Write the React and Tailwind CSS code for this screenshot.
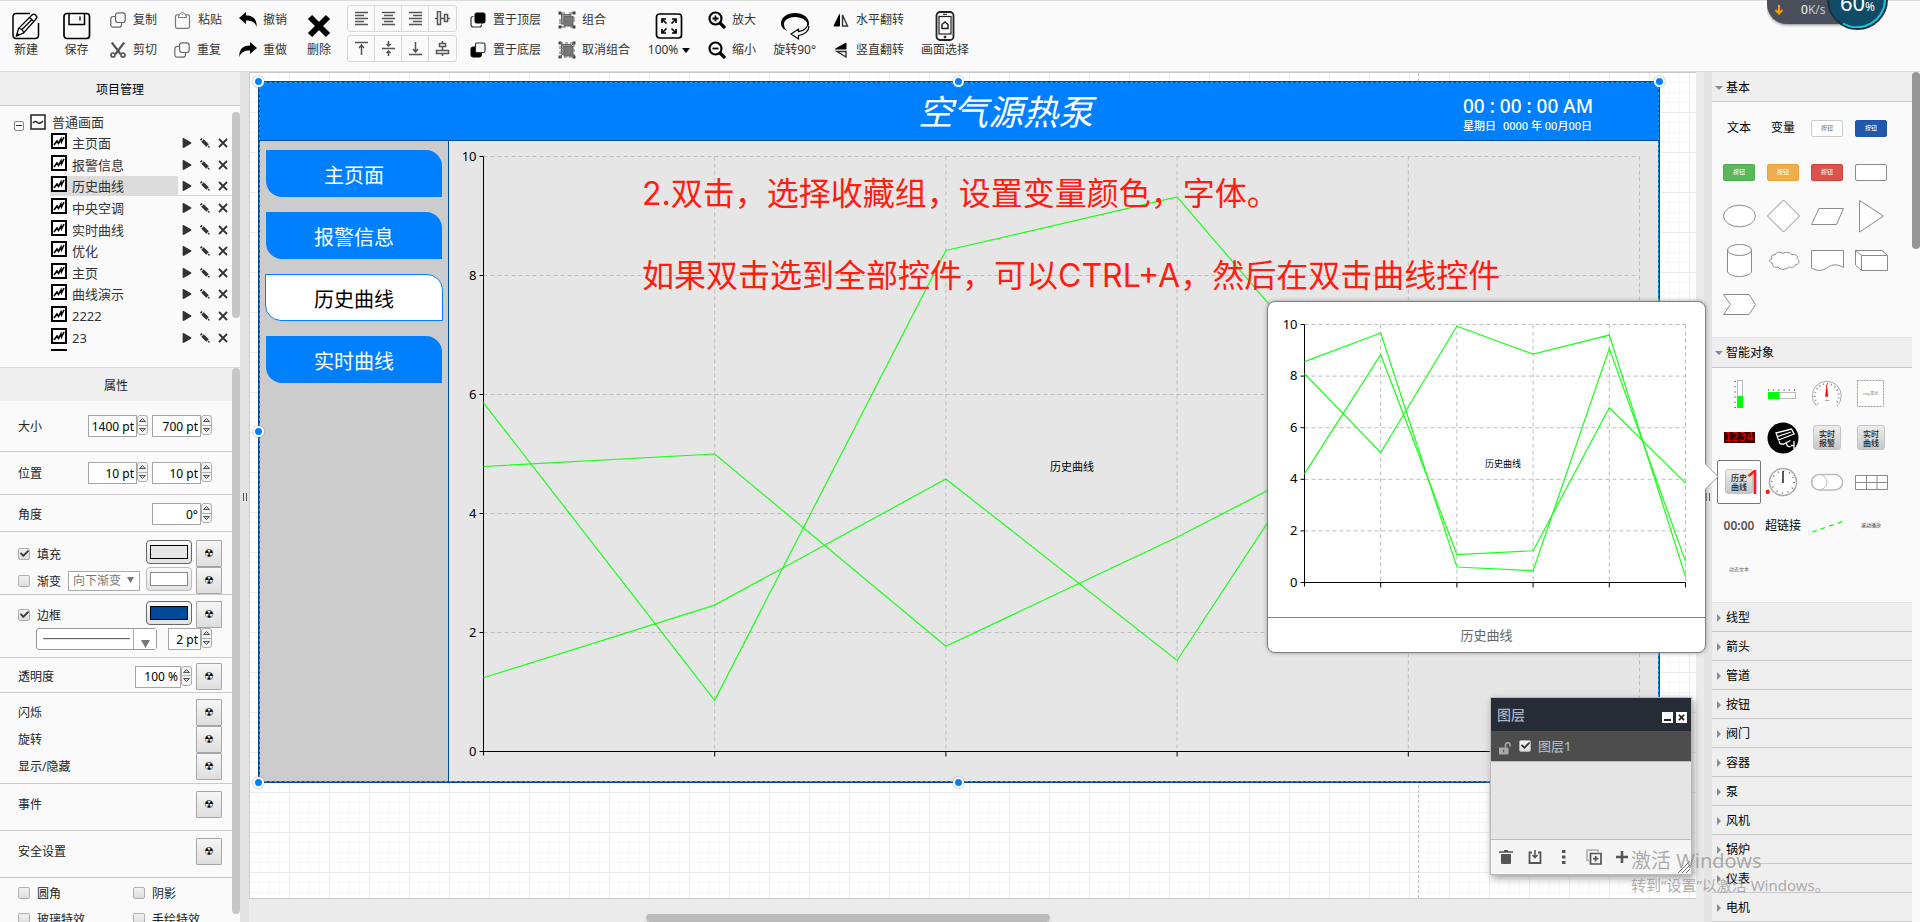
import React, { useState } from 'react';
import { FaCheck, FaPlay, FaTimes, FaTrash } from 'react-icons/fa';

const PAGES = ['主页面', '报警信息', '历史曲线', '中央空调', '实时曲线', '优化', '主页', '曲线演示', '2222', '23'];
const NAV_ITEMS = ['主页面', '报警信息', '历史曲线', '实时曲线'];
const CATEGORIES = ['线型', '箭头', '管道', '按钮', '阀门', '容器', '泵', '风机', '锅炉', '仪表', '电机'];

/* ---------- icons ---------- */

const Icon = ({ size = 16, box = 16, children, className = '' }) => (
  <svg
    width={size}
    height={size}
    viewBox={`0 0 ${box} ${box}`}
    fill="none"
    stroke="currentColor"
    className={`shrink-0 ${className}`}
    aria-hidden="true"
  >
    {children}
  </svg>
);

const NewIcon = () => (
  <Icon size={28} box={28} className="text-black">
    <path d="M18 1.500H4A3 3 0 0 0 1 4.500v19a3 3 0 0 0 3 3h19.500a3 3 0 0 0 3-3V11" strokeWidth="1.500" />
    <path d="M4.500 24l2-7.500L20 3c1.200-1.200 2.800-.8 3.800.2 1.200 1.200 1.400 2.600.2 3.800L11.500 21z" strokeWidth="1.300" />
    <path d="M6.500 16.500c2.500 0 5 2 5 4.500M17.500 5.500l4.500 4M9.500 18l10-10" strokeWidth="1.200" />
    <path d="M4.500 24l.8-3 2 2z" fill="currentColor" />
  </Icon>
);

const SaveIcon = () => (
  <Icon size={28} box={28} className="text-black">
    <rect x="1" y="1.500" width="25.500" height="25" rx="3" strokeWidth="1.700" />
    <path d="M6 2v10.500h15.500V2" strokeWidth="1.500" />
    <path d="M17 4.500v4" strokeWidth="1.300" />
  </Icon>
);

const CopyIcon = () => (
  <Icon className="text-[#666]">
    <rect x="5.500" y=".8" width="9.700" height="9.700" rx="2.500" strokeWidth="1.200" />
    <path d="M5.500 4.500H3A2.300 2.300 0 0 0 .8 6.800v6A2.300 2.300 0 0 0 3 15.200h6.200a2.300 2.300 0 0 0 2.300-2.300v-2.400" strokeWidth="1.200" />
  </Icon>
);

const CutIcon = () => (
  <Icon className="text-[#555]">
    <path d="M1.800.5L10.500 12M14.200.5L5.500 12" strokeWidth="2.200" />
    <circle cx="3" cy="13" r="2" strokeWidth="1.700" />
    <circle cx="13" cy="13" r="2" strokeWidth="1.700" />
  </Icon>
);

const PasteIcon = () => (
  <Icon size={17} box={17} className="text-[#777]">
    <rect x="1.500" y="2.800" width="14" height="13.500" rx="1.500" strokeWidth="1.200" />
    <path d="M4.500 5.500c0-3 2-2.500 2.500-4.500.8-.8 2.200-.8 3 0 .5 2 2.500 1.500 2.500 4.500z" fill="#fafafa" />
    <path d="M8.500 2v.8" />
  </Icon>
);

const UndoIcon = ({ redo }) => (
  <Icon size={18} box={18} className={redo ? 'text-black -scale-x-100' : 'text-black'}>
    <path d="M0 7L7 1v3.500c7 0 11 3.500 10.700 11.500C16 11 12.500 9.500 7 9.500V13z" fill="currentColor" stroke="none" />
  </Icon>
);

const ToFrontIcon = () => (
  <Icon className="text-[#333]">
    <rect x="5" y="1" width="10" height="10" rx="1.500" fill="#000" stroke="#000" />
    <path d="M3.500 4.500H3A2 2 0 0 0 1 6.500v6.300A2.200 2.200 0 0 0 3.200 15h6.300a2 2 0 0 0 2-2v-.5" strokeWidth="1.200" />
  </Icon>
);

const ToBackIcon = () => (
  <Icon className="text-[#333]">
    <rect x="1" y="5" width="10.500" height="10" rx="2" fill="#000" stroke="#000" />
    <rect x="5.500" y="1" width="9.500" height="9.500" rx="1.500" fill="#fafafa" strokeWidth="1.200" />
  </Icon>
);

const GroupIcon = ({ broken }) => (
  <Icon size={18} box={18} className="text-[#666]">
    <rect x="3.500" y="3.500" width="9.500" height="9.500" fill="#999" />
    <rect x="6" y="5.500" width="9" height="9.500" fill="#777" />
    <path d="M2 2h14v14H2z" strokeWidth="1" strokeDasharray={broken ? '3 2' : '5 4'} />
    {[[2, 2], [16, 2], [2, 16], [16, 16]].map(([x, y]) => (
      <rect key={`${x}-${y}`} x={x - 1} y={y - 1} width="2" height="2" fill="#444" stroke="#444" />
    ))}
    {broken && <path d="M2 2l4 4M16 2l-4 4M2 16l4-4M16 16l-4-4" />}
  </Icon>
);

const FitIcon = () => (
  <Icon size={28} box={28} className="text-black">
    <rect x="1.500" y="2" width="25" height="24" rx="3" strokeWidth="1.700" />
    <path d="M7 11V7h4M17 7h4v4M21 17v4h-4M11 21H7v-4M7.500 7.500l4 4M20.500 7.500l-4 4M20.500 20.500l-4-4M7.500 20.500l4-4" strokeWidth="1.700" />
  </Icon>
);

const ZoomIcon = ({ minus }) => (
  <Icon size={18} box={18} className="text-black">
    <circle cx="7.500" cy="7.500" r="6" strokeWidth="2.200" />
    <path d="M12 12l5 5" strokeWidth="3.200" />
    <path d={minus ? 'M4.500 7.500h6' : 'M4.500 7.500h6M7.500 4.500v6'} strokeWidth="1.800" />
  </Icon>
);

const RotateIcon = () => (
  <Icon size={30} box={30} className="text-black">
    <path d="M1 12.500C1 6.500 7 2 15 2s14 4.500 14 10.500c0 1-.2 2-.6 3C27.500 9.500 22 6 15 6 9 6 4 9 4 13c0 3 1 5 3.500 7C3 18.500 1 15.500 1 12.500z" fill="#000" stroke="none" />
    <path d="M28 12c0 4.500-4 8-9.500 8.700V18L11 23l7.500 5v-3.500c6.500-.8 10.500-5 10.500-9.500" strokeWidth="1.200" />
  </Icon>
);

const FlipHIcon = () => (
  <Icon>
    <path d="M6.500 2.500v11.500H1z" fill="#000" stroke="#000" />
    <path d="M9.500 3v11h5z" strokeWidth="1.400" stroke="#333" />
  </Icon>
);

const FlipVIcon = () => (
  <Icon>
    <path d="M13 1v6H2.500z" fill="#000" stroke="#000" />
    <path d="M13 15V9.500H4z" strokeWidth="1.400" stroke="#333" />
  </Icon>
);

const PhoneIcon = () => (
  <Icon size={30} box={30} className="text-[#222]">
    <rect x="6.500" y="1" width="17" height="28" rx="3.500" strokeWidth="1.800" />
    <rect x="9" y="5.500" width="12" height="17.500" strokeWidth="1.200" />
    <path d="M12 17.500v-4l3-2.500 3 2.500v4z" strokeWidth="1.500" />
    <path d="M13 3.300h4" />
    <circle cx="15" cy="26" r="1" fill="currentColor" />
  </Icon>
);

const ALIGN_ICONS = [
  { name: '左对齐', d: 'M1 1.500h13M1 4.500h9M1 7.500h13M1 10.500h9M1 13.500h13' },
  { name: '水平居中', d: 'M1 1.500h13M3 4.500h9M1 7.500h13M3 10.500h9M1 13.500h13' },
  { name: '右对齐', d: 'M1 1.500h13M5 4.500h9M1 7.500h13M5 10.500h9M1 13.500h13' },
  { name: '水平分布', d: 'M2.500.5h3v13h-3zM9.500 3.500h3v7h-3zM5.500 7.500h4M0 7.500h2.500M12.500 7.500H15' },
  { name: '顶端对齐', d: 'M1 1.500h13M7.500 4v10M5 7l2.500-3L10 7' },
  { name: '垂直居中', d: 'M1 7.500h13M7.500 0v5M5.500 3l2 2 2-2M7.500 15v-5M5.500 12l2-2 2 2' },
  { name: '底端对齐', d: 'M1 13.500h13M7.500 1v10M5 8l2.500 3L10 8' },
  { name: '垂直分布', d: 'M4.500 2.500h6v3h-6zM1.500 9.500h12v3h-12zM7.500 5.500v4M7.500 0v2.500M7.500 12.500V15' },
];

/* ---------- toolbar ---------- */

const BigTool = ({ icon, label, width }) => (
  <button type="button" className={`flex flex-col items-center pt-[7px] text-xs leading-5 text-[#333] ${width}`}>
    <span className="flex h-7 items-center">{icon}</span>
    <span className="flex items-center gap-1 whitespace-nowrap">{label}</span>
  </button>
);

const ToolPair = ({ items, gap = 'gap-[7px]' }) => (
  <div className="flex flex-col">
    {items.map(([icon, label]) => (
      <button key={label} type="button" className={`flex h-[30px] items-center whitespace-nowrap text-xs text-[#333] ${gap}`}>
        {icon}
        {label}
      </button>
    ))}
  </div>
);

const AlignGroup = () => (
  <div className="flex flex-col gap-[3px]">
    {[0, 4].map((start) => (
      <div key={start} className="flex h-[27px] divide-x divide-[#d8d8d8] rounded-[3px] border border-[#d8d8d8]">
        {ALIGN_ICONS.slice(start, start + 4).map((item) => (
          <button key={item.name} type="button" aria-label={item.name} className="flex w-[27px] items-center justify-center text-[#555]">
            <Icon size={15} box={15}>
              <path d={item.d} strokeWidth="1.500" />
            </Icon>
          </button>
        ))}
      </div>
    ))}
  </div>
);

const Toolbar = () => (
  <header className="flex h-[72px] shrink-0 gap-[17px] overflow-hidden border-y border-[#dcdcdc] bg-[#fafafa] pl-[9px] pt-1">
    <BigTool icon={<NewIcon />} label="新建" width="w-[34px]" />
    <BigTool icon={<SaveIcon />} label="保存" width="w-[33px]" />
    <ToolPair items={[[<CopyIcon />, '复制'], [<CutIcon />, '剪切']]} />
    <ToolPair items={[[<PasteIcon />, '粘贴'], [<CopyIcon />, '重复']]} />
    <ToolPair items={[[<UndoIcon />, '撤销'], [<UndoIcon redo />, '重做']]} gap="gap-[6px]" />
    <div className="flex gap-[13px]">
      <BigTool
        icon={
          <Icon size={24} box={24} className="text-black">
            <path d="M3 3l18 18M21 3L3 21" strokeWidth="6" />
          </Icon>
        }
        label="删除"
        width="w-[30px]"
      />
      <AlignGroup />
      <ToolPair items={[[<ToFrontIcon />, '置于顶层'], [<ToBackIcon />, '置于底层']]} />
    </div>
    <ToolPair items={[[<GroupIcon />, '组合'], [<GroupIcon broken />, '取消组合']]} gap="gap-[6px]" />
    <BigTool
      icon={<FitIcon />}
      label={
        <>
          100%
          <svg width="8" height="5" viewBox="0 0 8 5" aria-hidden="true">
            <path d="M0 0h8L4 5z" fill="#000" />
          </svg>
        </>
      }
      width="w-[44px]"
    />
    <ToolPair items={[[<ZoomIcon />, '放大'], [<ZoomIcon minus />, '缩小']]} gap="gap-[6px]" />
    <BigTool icon={<RotateIcon />} label="旋转90°" width="w-[43px]" />
    <ToolPair items={[[<FlipHIcon />, '水平翻转'], [<FlipVIcon />, '竖直翻转']]} />
    <BigTool icon={<PhoneIcon />} label="画面选择" width="w-12" />
  </header>
);

/* ---------- left column: page tree ---------- */

const PageIcon = () => (
  <Icon className="text-black">
    <rect x="1" y="1" width="14" height="14" strokeWidth="2" fill="#fff" />
    <path d="M3 12l3-4 1.500 2.500L10 6l.5 3L13 4" strokeWidth="1.600" />
  </Icon>
);

const RowAction = ({ label, children }) => (
  <button type="button" aria-label={label} className="flex w-[18px] items-center justify-center text-[#333]">
    {children}
  </button>
);

const PageTree = ({ current, onSelect }) => (
  <section className="flex h-[295px] shrink-0 flex-col">
    <h2 className="flex h-[34px] shrink-0 items-center justify-center border-b border-[#c4c4c4] bg-[#efefef] pt-[2px] text-xs text-black">项目管理</h2>
    <div className="flex flex-1">
      <div className="h-[245px] flex-1 overflow-hidden text-[13px] text-[#333]">
        <div className="flex h-[27px] items-center gap-[6px] pl-[14px] pt-1">
          <button type="button" aria-label="折叠" className="mt-2 flex size-[10px] items-center justify-center rounded-[2px] border border-[#888] bg-white">
            <span className="h-px w-[6px] bg-[#333]" />
          </button>
          <Icon className="text-[#222]">
            <rect x="1" y="1" width="14" height="14" strokeWidth="1.500" fill="#fff" />
            <path d="M3 9c1.500-2 3-2 4.500-.5S11 9 13 7" strokeWidth="1.400" />
          </Icon>
          <span className="leading-4">普通画面</span>
        </div>
        <ul className="grid h-[238px] auto-rows-fr">
          {PAGES.map((page) => (
            <li key={page} className="flex min-h-0 pl-[50px]">
              <button
                type="button"
                onClick={() => onSelect(page)}
                className={`flex h-5 w-32 items-start gap-[5px] pl-px text-left ${current === page ? 'bg-[#dcdcdc]' : ''}`}
              >
                <PageIcon />
                <span className="leading-5">{page}</span>
              </button>
              <span className={`flex h-5 flex-1 border-b pt-px ${current === page ? 'border-[#d8d8d8]' : 'border-transparent'}`}>
                <RowAction label="运行">
                  <FaPlay size={10} />
                </RowAction>
                <RowAction label="编辑">
                  <Icon size={10} box={10}>
                    <path d="M.8.8l1 1" strokeWidth="2.500" />
                    <path d="M2.500 2.500L7.500 7.500" strokeWidth="3.600" />
                    <path d="M8 8l1.500 1.500" strokeWidth="1.200" />
                  </Icon>
                </RowAction>
                <RowAction label="删除">
                  <Icon size={10} box={10}>
                    <path d="M1 1l8 8M9 1L1 9" strokeWidth="1.800" />
                  </Icon>
                </RowAction>
              </span>
            </li>
          ))}
          <li className="flex min-h-0 pl-[51px]">
            <button type="button" aria-label="24" className="h-4">
              <PageIcon />
            </button>
          </li>
        </ul>
      </div>
      <div className="w-2 pt-[6px]">
        <div className="h-[206px] rounded bg-[#c6c6c6]" />
      </div>
    </div>
  </section>
);

/* ---------- left column: properties ---------- */

const Stepper = ({ label }) => (
  <span className="flex h-5 w-[11px] flex-col overflow-hidden rounded-[3px] border border-[#b0b0b0] bg-[#f4f4f4]">
    <button type="button" aria-label={`${label}增加`} className="flex flex-1 items-center justify-center border-b border-[#b0b0b0]">
      <svg width="7" height="4" viewBox="0 0 7 4" aria-hidden="true">
        <path d="M.5 3.500h6L3.500.5z" fill="#ccc" stroke="#555" />
      </svg>
    </button>
    <button type="button" aria-label={`${label}减少`} className="flex flex-1 items-center justify-center">
      <svg width="7" height="4" viewBox="0 0 7 4" aria-hidden="true">
        <path d="M.5.5h6L3.500 3.500z" fill="#ccc" stroke="#555" />
      </svg>
    </button>
  </span>
);

const NumberField = ({ label, value, width = 'w-[49px]' }) => (
  <span className="flex">
    <input
      type="text"
      aria-label={label}
      defaultValue={value}
      className={`h-[22px] border border-[#a6a6a6] bg-white pr-[2px] text-right text-xs text-black ${width}`}
    />
    <Stepper label={label} />
  </span>
);

const Tick = ({ id, checked = false, label }) => (
  <span className="relative flex size-3 shrink-0">
    <input
      id={id}
      type="checkbox"
      aria-label={label}
      defaultChecked={checked}
      className="peer size-3 appearance-none rounded-[2px] border border-[#b0b0b0] bg-gradient-to-b from-[#f2f2f2] to-[#dcdcdc]"
    />
    <FaCheck size={9} className="pointer-events-none absolute left-[2px] top-px hidden text-[#333] peer-checked:block" />
  </span>
);

const CheckLabel = ({ id, label, checked, width = '' }) => (
  <span className={`flex items-center gap-[7px] ${width}`}>
    <Tick id={id} checked={checked} />
    <label htmlFor={id} className="pt-[2px]">{label}</label>
  </span>
);

const Swatch = ({ label, color, muted }) => (
  <button
    type="button"
    aria-label={label}
    className={`flex h-6 w-[46px] items-center justify-center rounded-[4px] border bg-gradient-to-b from-[#fafafa] to-[#e2e2e2] ${muted ? 'border-[#bbb]' : 'border-[#666]'}`}
  >
    <span className={`h-[14px] w-[38px] border ${muted ? 'border-[#888]' : 'border-black'} ${color}`} />
  </button>
);

const BindButton = ({ label }) => (
  <button
    type="button"
    aria-label={`${label}绑定变量`}
    className="h-[27px] w-[26px] rounded-[1px] border border-[#a6a6a6] bg-gradient-to-b from-[#f6f6f6] to-[#dedede] pt-px font-['DejaVu_Sans',sans-serif] text-[11px] leading-6 text-black"
  >
    ☢
  </button>
);

const Group = ({ size, children }) => <div className={`flex flex-col border-b border-[#c9c9c9] pl-[18px] ${size}`}>{children}</div>;

const BindRow = ({ label, children }) => (
  <div className="flex h-[27px] items-center pr-[10px]">
    <span className="mr-auto">{label}</span>
    {children}
    <BindButton label={label} />
  </div>
);

const Properties = () => (
  <section className="flex min-h-0 flex-1 border-t border-[#dcdcdc]">
    <div className="min-w-0 flex-1 overflow-hidden text-xs text-[#222]">
      <h2 className="flex h-[33px] items-center justify-center bg-[#efefef] pt-[2px]">属性</h2>
      <Group size="h-[51px] pt-[14px]">
        <div className="flex gap-1 pr-5">
          <span className="mr-auto leading-6">大小</span>
          <NumberField label="宽度" value="1400 pt" />
          <NumberField label="高度" value="700 pt" />
        </div>
      </Group>
      <Group size="h-[43px] pt-[10px]">
        <div className="flex gap-1 pr-5">
          <span className="mr-auto leading-6">位置</span>
          <NumberField label="横坐标" value="10 pt" />
          <NumberField label="纵坐标" value="10 pt" />
        </div>
      </Group>
      <Group size="h-[37px] pt-2">
        <div className="flex pr-5">
          <span className="mr-auto leading-6">角度</span>
          <NumberField label="旋转角度" value="0°" />
        </div>
      </Group>
      <Group size="h-[63px] pt-2">
        <div className="flex gap-1 pr-[10px]">
          <CheckLabel id="fill" label="填充" checked width="mr-auto" />
          <Swatch label="填充颜色" color="bg-[#e6e6e6]" />
          <BindButton label="填充" />
        </div>
        <div className="flex gap-1 pr-[10px]">
          <CheckLabel id="gradient" label="渐变" />
          <span className="relative ml-auto mr-[2px] flex h-5 self-center">
            <select aria-label="渐变方向" className="h-5 w-[72px] appearance-none border border-[#aaa] bg-white pl-1 text-xs leading-4 text-[#777]">
              <option>向下渐变</option>
            </select>
            <svg width="7" height="6" viewBox="0 0 7 6" className="pointer-events-none absolute right-[6px] top-[6px]" aria-hidden="true">
              <path d="M0 0h7L3.500 6z" fill="#777" />
            </svg>
          </span>
          <Swatch label="渐变颜色" color="bg-white" muted />
          <BindButton label="渐变" />
        </div>
      </Group>
      <Group size="h-[63px] pt-[6px]">
        <div className="flex gap-1 pr-[10px]">
          <CheckLabel id="border" label="边框" checked width="mr-auto" />
          <Swatch label="边框颜色" color="bg-[#004b99]" />
          <BindButton label="边框" />
        </div>
        <div className="flex justify-between pl-[18px] pr-5">
          <span className="relative flex">
            <select
              aria-label="线条样式"
              className="h-[22px] w-[121px] appearance-none rounded-[3px] border border-[#999] bg-white pl-[6px] font-['DejaVu_Sans_Mono',monospace] text-xs leading-5 text-[#555]"
            >
              <option>────────────</option>
            </select>
            <span className="pointer-events-none absolute inset-y-px right-px flex w-[23px] items-end justify-center border-l border-[#aaa] bg-white pb-px">
              <svg width="9" height="8" viewBox="0 0 9 8" aria-hidden="true">
                <path d="M0 0h9L4.500 8z" fill="#777" />
              </svg>
            </span>
          </span>
          <NumberField label="线宽" value="2 pt" width="w-[33px]" />
        </div>
      </Group>
      <Group size="h-[35px] pt-[5px]">
        <BindRow label="透明度">
          <span className="mr-1">
            <NumberField label="透明度数值" value="100 %" width="w-[46px]" />
          </span>
        </BindRow>
      </Group>
      <Group size="h-[91px] pt-[6px]">
        <BindRow label="闪烁" />
        <BindRow label="旋转" />
        <BindRow label="显示/隐藏" />
      </Group>
      <Group size="h-[47px] pt-[7px]">
        <BindRow label="事件" />
      </Group>
      <Group size="h-[47px] pt-[7px]">
        <BindRow label="安全设置" />
      </Group>
      <div className="grid grid-cols-[115px_1fr] gap-y-1 pl-[18px] pt-1 leading-5">
        <CheckLabel id="round" label="圆角" />
        <CheckLabel id="shadow" label="阴影" />
        <CheckLabel id="glass" label="玻璃特效" />
        <CheckLabel id="sketch" label="手绘特效" />
      </div>
    </div>
    <div className="w-2 shrink-0">
      <div className="h-[546px] rounded bg-[#c6c6c6]" />
    </div>
  </section>
);

const Splitter = ({ width }) => (
  <div className={`flex shrink-0 justify-center bg-[#e4e4e4] pt-[421px] ${width}`}>
    <span className="h-2 w-1 border-x border-[#555]" />
  </div>
);

/* ---------- charts ---------- */

const LineChart = ({ width, height, plot, series, label, labelAt, labelSize }) => {
  const { left, top, right, bottom } = plot;
  const x = (i) => left + ((right - left) * i) / 5;
  const y = (v) => bottom - ((bottom - top) * v) / 10;
  return (
    <svg width={width} height={height} viewBox={`0 0 ${width} ${height}`} className="block" role="img" aria-label={label}>
      <g stroke="#bdbdbd" strokeDasharray="4 3">
        {[2, 4, 6, 8, 10].map((v) => (
          <path key={v} d={`M${left} ${y(v)}H${right}`} />
        ))}
        {[1, 2, 3, 4, 5].map((i) => (
          <path key={i} d={`M${x(i)} ${top}V${bottom}`} />
        ))}
      </g>
      <g stroke="#000">
        <path d={`M${left} ${top}V${bottom + 4}M${left - 4} ${bottom}H${right}`} />
        {[2, 4, 6, 8, 10].map((v) => (
          <path key={v} d={`M${left - 4} ${y(v)}h4`} />
        ))}
        {[1, 2, 3, 4, 5].map((i) => (
          <path key={i} d={`M${x(i)} ${bottom}v5`} />
        ))}
      </g>
      {series.map((points) => (
        <polyline key={points.join()} points={points.map((v, i) => `${x(i)},${y(v)}`).join(' ')} fill="none" stroke="#1aff1a" strokeWidth="1.200" />
      ))}
      <g fontSize="13" textAnchor="end" fill="#000">
        {[0, 2, 4, 6, 8, 10].map((v) => (
          <text key={v} x={left - 7} y={y(v) + 4}>
            {v}
          </text>
        ))}
      </g>
      <text x={labelAt[0]} y={labelAt[1]} fontSize={labelSize} textAnchor="middle" fill="#000">
        {label}
      </text>
    </svg>
  );
};

const MAIN_SERIES = [
  [5.86, 0.86, 8.42, 9.32, 4.79, 4.2],
  [4.79, 5, 1.77, 3.6, 5.61, 4.8],
  [1.24, 2.46, 4.58, 1.53, 7.45, 5],
];

const PREVIEW_SERIES = [
  [8.56, 9.67, 0.6, 0.46, 9.07, 0.82],
  [4.21, 8.83, 1.08, 1.23, 6.77, 3.85],
  [8.09, 5.04, 9.93, 8.85, 9.59, 0.23],
];

/* ---------- canvas ---------- */

const Handle = ({ place }) => (
  <span className={`absolute size-[11px] rounded-full border-2 border-white bg-[#0080ff] shadow-[0_0_2px_#888] ${place}`} />
);

const Screen = () => (
  <div className="absolute left-2 top-2 h-[702px] w-[1402px]">
    <div className="flex h-full flex-col border-2 border-[#004b99] bg-[#e6e6e6]">
      <div className="flex h-[58px] shrink-0 items-center border-b border-[#004b99] bg-[#0080ff] pl-[658px] text-white">
        <h1 className="text-[35px] italic leading-[48px]">空气源热泵</h1>
        <div className="ml-auto mr-[66px] w-[129px] pt-[6px] font-medium">
          <p className="whitespace-nowrap text-[19px] leading-[22px]">00 : 00 : 00 AM</p>
          <p className="flex justify-between whitespace-nowrap text-[11px] leading-[18px]">
            <span>星期日</span>
            <span>0000 年 00月00日</span>
          </p>
        </div>
      </div>
      <div className="flex min-h-0 flex-1">
        <nav className="flex w-[188px] shrink-0 flex-col items-center gap-[15px] bg-[#ccc] pt-[9px]">
          {NAV_ITEMS.map((item) => (
            <button
              key={item}
              type="button"
              className={`h-[47px] rounded-bl-[16px] rounded-tr-[16px] pt-1 text-xl ${
                item === '历史曲线' ? 'w-[178px] border border-[#0080ff] bg-white text-black' : 'w-44 bg-[#0080ff] text-white'
              }`}
            >
              {item}
            </button>
          ))}
        </nav>
        <div className="flex-1 overflow-hidden border-l border-[#004b99]">
          <LineChart
            width={1209}
            height={638}
            plot={{ left: 34.5, top: 15.5, right: 1190.5, bottom: 610.5 }}
            series={MAIN_SERIES}
            label="历史曲线"
            labelAt={[623, 330]}
            labelSize={11}
          />
        </div>
      </div>
    </div>
    <div className="absolute inset-px border border-dashed border-[#00a8ff]" />
    <div className="absolute left-[384px] top-[72px] whitespace-nowrap font-['Inter','Noto_Sans_CJK_SC',sans-serif] text-[32px] leading-[82px] text-[#ff1c10]">
      <p>2.双击，选择收藏组，设置变量颜色，字体。</p>
      <p>如果双击选到全部控件，可以CTRL+A，然后在双击曲线控件</p>
    </div>
    <Handle place="-left-[5px] -top-[5px]" />
    <Handle place="-top-[5px] left-[695px]" />
    <Handle place="-right-[5px] -top-[5px]" />
    <Handle place="-left-[5px] top-[345px]" />
    <Handle place="-right-[5px] top-[345px]" />
    <Handle place="-bottom-[5px] -left-[5px]" />
    <Handle place="-bottom-[5px] left-[695px]" />
    <Handle place="-bottom-[5px] -right-[5px]" />
  </div>
);

const Canvas = () => (
  <main className="flex min-w-0 flex-1 flex-col bg-[#ebebeb] pr-2">
    <div className="relative h-[827px] overflow-hidden border border-r-0 border-[#c9c9c9] bg-white bg-[linear-gradient(to_right,#ebebeb_1px,transparent_1px),linear-gradient(#ebebeb_1px,transparent_1px),linear-gradient(to_right,#f8f8f8_1px,transparent_1px),linear-gradient(#f8f8f8_1px,transparent_1px)] bg-[size:40px_40px,40px_40px,10px_10px,10px_10px] bg-[position:39px_39px,39px_39px,9px_9px,9px_9px]">
      <div className="absolute inset-y-0 left-[1168px] border-l border-dashed border-[#c4c4c4]" />
      <Screen />
    </div>
    <div className="flex flex-1 items-end">
      <div className="ml-[397px] h-2 w-[404px] rounded bg-[#bbb]" />
    </div>
  </main>
);

/* ---------- right column: palette ---------- */

const Cell = ({ name, children, selected }) => (
  <button
    type="button"
    aria-label={name}
    className={`flex size-11 items-center justify-center whitespace-nowrap text-xs text-black ${selected ? 'rounded-[2px] border border-[#777] bg-white' : ''}`}
  >
    {children}
  </button>
);

const Shape = ({ children }) => (
  <svg width="44" height="44" viewBox="0 0 44 44" fill="#fff" stroke="#8a8a8a" className="shrink-0" aria-hidden="true">
    {children}
  </svg>
);

const MiniButton = ({ look }) => (
  <span className={`flex h-[17px] w-8 items-center justify-center rounded-[2px] border text-[6px] leading-none ${look}`}>按钮</span>
);

const MetalButton = ({ top, bottom }) => (
  <span className="flex h-[25px] w-7 flex-col items-center justify-center rounded-[3px] border border-[#c4c4c4] bg-gradient-to-b from-[#eee] to-[#c8c8c8] text-[8px] font-medium leading-[9px] text-[#222]">
    <span>{top}</span>
    <span>{bottom}</span>
  </span>
);

const SectionTitle = ({ title, open }) => (
  <button
    type="button"
    aria-expanded={!!open}
    className={`flex w-full shrink-0 items-center border-b border-[#c9c9c9] bg-[#efefef] pt-[2px] text-xs text-black ${open ? 'h-[30px]' : 'h-[29px]'}`}
  >
    <span className="flex w-[14px] justify-center">
      <svg width="8" height="8" viewBox="0 0 8 8" aria-hidden="true">
        <path d={open ? 'M0 2h8L4 6z' : 'M2 0v8l4-4z'} fill="#8c8c8c" />
      </svg>
    </span>
    {title}
  </button>
);

const BasicShapes = () => (
  <div className="grid h-[237px] grid-cols-[repeat(4,44px)] content-start border-b border-[#e2e2e2] pl-[5px] pt-1">
    <Cell name="文本">文本</Cell>
    <Cell name="变量">变量</Cell>
    <Cell name="白色按钮"><MiniButton look="border-[#ccc] bg-white text-[#777]" /></Cell>
    <Cell name="蓝色按钮"><MiniButton look="border-[#1f57a8] bg-[#2159ab] text-white" /></Cell>
    <Cell name="绿色按钮"><MiniButton look="border-[#4cae4c] bg-[#5cb85c] text-white" /></Cell>
    <Cell name="橙色按钮"><MiniButton look="border-[#eea236] bg-[#f0ad4e] text-white" /></Cell>
    <Cell name="红色按钮"><MiniButton look="border-[#d43f3a] bg-[#d9534f] text-white" /></Cell>
    <Cell name="矩形"><span className="h-[17px] w-8 rounded-[2px] border border-[#8a8a8a] bg-white" /></Cell>
    <Cell name="椭圆"><Shape><ellipse cx="22.500" cy="22" rx="16" ry="10.800" /></Shape></Cell>
    <Cell name="菱形"><Shape><path d="M22.500 6l16 16-16 16-16-16z" /></Shape></Cell>
    <Cell name="平行四边形"><Shape><path d="M14 14.500h24.500l-7 16H6.500z" /></Shape></Cell>
    <Cell name="三角形"><Shape><path d="M10.500 6.500L34.500 22l-24 16z" /></Shape></Cell>
    <Cell name="圆柱">
      <Shape>
        <path d="M10.500 12v21c0 3 5.500 5.500 12 5.500s12-2.500 12-5.500V12" />
        <ellipse cx="22.500" cy="12" rx="12" ry="5.500" />
      </Shape>
    </Cell>
    <Cell name="云">
      <Shape>
        <path d="M14 17c1-3.500 6-3.500 8-1.500 2.500-2 8-1 8.500 1.200 4-.7 7 1 5.500 3.800 3 2.500 2.500 6-1.500 6-.5 3-4.500 3.500-7 2.500-2.500 3-9 3-10.500 0-4 1-6-.8-5-3.500-4-.5-4.500-4-1-4.500-1.500-3 0-4.500 3-4z" />
      </Shape>
    </Cell>
    <Cell name="文档"><Shape><path d="M6.500 12.500h32v17c-6-3.500-11-3.500-16 0-5 3.500-10 4-16 .5z" /></Shape></Cell>
    <Cell name="立方体">
      <Shape>
        <path d="M6.500 12.500h26.500l5.500 5v15h-26l-6-5.500z" />
        <path d="M6.500 12.500l6 5h26M12.500 17.500v15" fill="none" />
      </Shape>
    </Cell>
    <Cell name="步骤"><Shape><path d="M6.500 12.500H32l6.500 10-6.500 10H6.500l7-10z" /></Shape></Cell>
  </div>
);

const SmartObjects = () => (
  <div className="grid h-[237px] grid-cols-[repeat(4,44px)] content-start border-b border-[#e2e2e2] pl-[5px] pt-1">
    <Cell name="竖向进度条">
      <Shape>
        <rect x="20.500" y="8.500" width="5" height="27" stroke="#bbb" />
        <rect x="20.500" y="24.500" width="5" height="11" fill="#0f0" stroke="#0f0" />
        <path d="M18 9v27" strokeWidth="2" strokeDasharray="1 4.200" />
      </Shape>
    </Cell>
    <Cell name="横向进度条">
      <Shape>
        <rect x="7.500" y="20.500" width="27" height="6" stroke="#bbb" />
        <rect x="7.500" y="20.500" width="10.500" height="6" fill="#0f0" stroke="#0f0" />
        <path d="M7 18h28.500" strokeWidth="2" strokeDasharray="1 4.200" />
      </Shape>
    </Cell>
    <Cell name="仪表盘">
      <Shape>
        <path d="M11.500 34a14.500 14.500 0 1 1 20.500 0" stroke="#aaa" />
        <path d="M13 32a12 12 0 1 1 17.500 0" fill="none" stroke="#888" strokeWidth="2" strokeDasharray="1 3" />
        <path d="M21.700 12.500l1.200 12h-2.400z" fill="#f00" stroke="#f00" strokeWidth=".5" />
        <path d="M20 28.500h4" stroke="#aaa" />
      </Shape>
    </Cell>
    <Cell name="媒体">
      <Shape>
        <rect x="8.500" y="8.500" width="26" height="26" stroke="#999" strokeDasharray="2 1" />
        <text x="21.500" y="23" fontSize="4" textAnchor="middle" fill="#777" stroke="none">rtsp显示</text>
      </Shape>
    </Cell>
    <Cell name="数码管">
      <span className="h-[11px] w-[31px] overflow-hidden bg-[#3d0000] text-center font-['DejaVu_Sans_Mono',monospace] text-xs leading-[11px] text-[#e60000]">1234</span>
    </Cell>
    <Cell name="摄像头">
      <Shape>
        <circle cx="22" cy="22" r="15.500" fill="#000" stroke="none" />
        <path d="M15 17l15.500-4 2.500 5-15.500 6zM17 20.500l13-4.500M18.500 25c-.5 2.500 1 3.500 4 3l7-3.500M25.500 27c0 3 1.500 4 4 3.500M33 25v8M30 29.500h3" fill="none" stroke="#fff" strokeWidth="1.300" />
      </Shape>
    </Cell>
    <Cell name="实时报警"><MetalButton top="实时" bottom="报警" /></Cell>
    <Cell name="实时曲线"><MetalButton top="实时" bottom="曲线" /></Cell>
    <Cell name="历史曲线" selected><MetalButton top="历史" bottom="曲线" /></Cell>
    <Cell name="时钟">
      <Shape>
        <circle cx="22" cy="22" r="13.500" stroke="#aaa" strokeWidth="1.500" />
        <circle cx="22" cy="22" r="11" fill="none" stroke="#666" strokeWidth="1.500" strokeDasharray="1 4.760" />
        <path d="M22 11v12" stroke="#000" strokeWidth="1.300" />
      </Shape>
    </Cell>
    <Cell name="开关">
      <Shape>
        <rect x="6.500" y="14.500" width="31" height="15.500" rx="7.750" stroke="#bbb" strokeWidth="1.500" />
        <circle cx="14.500" cy="22.200" r="7.500" stroke="#bbb" />
      </Shape>
    </Cell>
    <Cell name="表格"><Shape><path d="M6.500 15.500h32v14h-32zM6.500 22.500h32M17.500 15.500v14M28 15.500v14" /></Shape></Cell>
    <Cell name="时间"><span className="font-semibold text-[#555]">00:00</span></Cell>
    <Cell name="超链接">超链接</Cell>
    <Cell name="流动线"><Shape><path d="M7 28l31-10.500" stroke="#1f1" strokeWidth="1.300" strokeDasharray="5 4" /></Shape></Cell>
    <Cell name="滚动播放"><span className="text-[5px] text-[#444]">滚动播放</span></Cell>
    <Cell name="动态文本"><span className="text-[5px] text-[#666]">动态文本</span></Cell>
  </div>
);

const Palette = () => (
  <aside className="flex w-[208px] shrink-0 bg-[#fafafa]">
    <div className="flex w-[200px] flex-col overflow-hidden">
      <SectionTitle title="基本" open />
      <BasicShapes />
      <SectionTitle title="智能对象" open />
      <SmartObjects />
      {CATEGORIES.map((name) => (
        <SectionTitle key={name} title={name} />
      ))}
    </div>
    <div className="w-2">
      <div className="h-[177px] rounded bg-[#969696]" />
    </div>
  </aside>
);

/* ---------- floating windows ---------- */

const PreviewPopup = () => (
  <div className="absolute right-[214px] top-[301px] w-[439px] rounded-[8px] border border-[#808080] bg-white shadow-[0_0_4px_#999]">
    <LineChart
      width={437}
      height={315}
      plot={{ left: 36.5, top: 22.5, right: 417.5, bottom: 280.5 }}
      series={PREVIEW_SERIES}
      label="历史曲线"
      labelAt={[235, 165]}
      labelSize={9}
    />
    <p className="border-t border-[#808080] text-center text-[13px] leading-[34px] text-[#666]">历史曲线</p>
    <svg width="14" height="27" viewBox="0 0 14 27" className="absolute -right-[14px] top-[161px]" aria-hidden="true">
      <path d="M0 .5L13 13.500 0 26.500" fill="#fff" stroke="#999" />
    </svg>
  </div>
);

const LayersPanel = () => (
  <section className="absolute right-[228px] top-[697px] flex h-[178px] w-[202px] flex-col border border-[#bbb] bg-[#e5e5e5] text-[#aab4c2] shadow-[2px_3px_8px_#999]">
    <div className="flex h-[33px] items-center gap-[3px] bg-[#252c36] pl-[6px] pr-1">
      <h2 className="mr-auto text-sm font-medium">图层</h2>
      <button type="button" aria-label="最小化" className="mt-[5px] flex size-[11px] items-end bg-white p-[2px]">
        <span className="h-[2px] w-full bg-[#222]" />
      </button>
      <button type="button" aria-label="关闭" className="mt-[5px] flex size-[11px] items-center justify-center bg-white text-[#222]">
        <FaTimes size={9} />
      </button>
    </div>
    <div className="flex h-[31px] items-center gap-[7px] border-b border-[#bbb] bg-[#4d4d4d] pl-[7px]">
      <Icon size={14} box={14} className="mt-1">
        <path d="M1.500 7h8.500v6H1.500z" fill="#aaa" stroke="#aaa" />
        <path d="M7.500 6.500V4a2.300 2.300 0 0 1 4.600 0v1.500" stroke="#aaa" strokeWidth="1.600" />
        <path d="M5.700 8.500v3" stroke="#4d4d4d" />
      </Icon>
      <span className="flex items-center gap-[7px] text-[13px] font-medium">
        <Tick id="layer-1" checked />
        <label htmlFor="layer-1" className="pt-[2px]">图层1</label>
      </span>
    </div>
    <div className="flex-1" />
    <div className="flex h-[35px] items-center gap-[15px] border-t border-[#bbb] bg-[#f5f5f5] pl-2 text-[#555]">
      <button type="button" aria-label="删除图层">
        <Icon size={14} box={14}>
          <path d="M0 2h14M5 .8h4" strokeWidth="1.600" />
          <path d="M2.500 4.500h9v9h-9z" fill="currentColor" />
        </Icon>
      </button>
      <button type="button" aria-label="导入">
        <Icon size={14} box={14}>
          <path d="M4 2.500H1.500v10.500h11V2.500H10" strokeWidth="1.800" />
          <path d="M7 0v7M4.500 5L7 7.500 9.500 5" strokeWidth="1.600" />
        </Icon>
      </button>
      <button type="button" aria-label="更多" className="px-[5px]">
        <svg width="4" height="14" viewBox="0 0 4 14" fill="currentColor" aria-hidden="true">
          <path d="M0 0h3.500v3H0zM0 5.500h3.500v3H0zM0 11h3.500v3H0z" />
        </svg>
      </button>
      <button type="button" aria-label="复制图层">
        <Icon>
          <path d="M3 11.500H1V1h11v2" stroke="#aaa" strokeWidth="1.500" />
          <path d="M4.500 4.500h10.500v10.500H4.500zM9.700 7v5.500M7 9.700h5.500" strokeWidth="1.700" />
        </Icon>
      </button>
      <button type="button" aria-label="新增图层" className="-ml-[2px]">
        <Icon size={14} box={14}>
          <path d="M7 1v12M1 7h12" strokeWidth="2.600" />
        </Icon>
      </button>
    </div>
    <svg width="12" height="12" viewBox="0 0 12 12" stroke="#777" className="absolute bottom-px right-px" aria-hidden="true">
      <path d="M0 12L12 0M4 12l8-8M8 12l4-4" />
    </svg>
  </section>
);

const SpeedWidget = () => (
  <div className="absolute right-8 top-0 flex h-8 w-[121px] overflow-hidden">
    <div className="flex h-6 w-[85px] items-center rounded-bl-[20px] bg-[#4a4f5c] pb-1 pl-[7px] text-xs text-[#c4c8d0] shadow-[0_1px_3px_#888]">
      <Icon size={10} box={10} className="text-[#ff9a00]">
        <path d="M5 0v9M1.500 5L5 8.500 8.500 5" strokeWidth="2" />
      </Icon>
      <span className="ml-[17px] leading-5">
        <span className="text-white">0</span>K/s
      </span>
    </div>
    <div className="absolute -top-[31px] right-0 flex size-[61px] items-end justify-center rounded-full border-2 border-[#1d3040] bg-[#114c66] pb-3 text-white">
      <svg width="57" height="57" viewBox="0 0 57 57" className="absolute left-0 top-0" fill="none" aria-hidden="true">
        <path d="M14 52.500A28 28 0 0 0 56 28" stroke="#1fc3dc" strokeWidth="2" />
      </svg>
      <span className="text-[22px] leading-7">
        60<span className="text-xs">%</span>
      </span>
    </div>
  </div>
);

export default function App() {
  const [page, setPage] = useState('历史曲线');

  return (
    <div className="relative flex h-screen flex-col overflow-hidden bg-[#fafafa] font-['Noto_Sans','Noto_Sans_CJK_SC',sans-serif]">
      <Toolbar />
      <div className="flex min-h-0 flex-1">
        <aside className="flex w-60 shrink-0 flex-col bg-[#fafafa]">
          <PageTree current={page} onSelect={setPage} />
          <Properties />
        </aside>
        <Splitter width="w-[9px]" />
        <Canvas />
        <Splitter width="w-2" />
        <Palette />
      </div>

      <LayersPanel />
      <PreviewPopup />
      <SpeedWidget />
      <p className="pointer-events-none absolute right-[148px] top-[460px] text-[32px] leading-[44px] text-[#ff1c10]">1.</p>
      <div className="pointer-events-none absolute right-[80px] top-[848px] w-[209px] whitespace-nowrap text-[#8c8c8c]/70">
        <p className="text-xl leading-[26px]">激活 Windows</p>
        <p className="text-[15px] leading-[22px]">转到“设置”以激活 Windows。</p>
      </div>
    </div>
  );
}
